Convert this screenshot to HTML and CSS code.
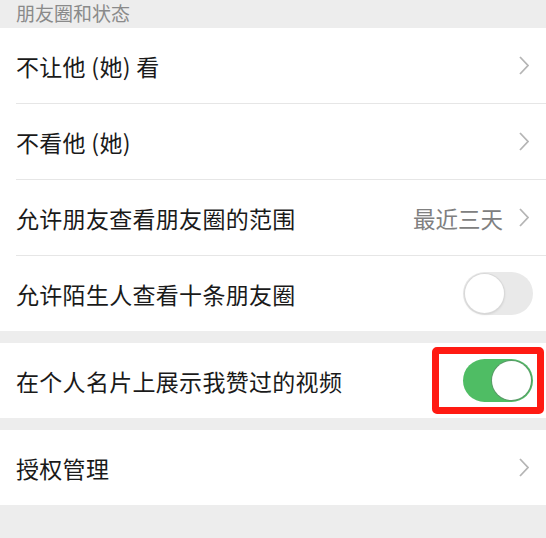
FILE: index.html
```html
<!DOCTYPE html>
<html lang="zh-CN">
<head>
<meta charset="utf-8">
<title>朋友圈和状态</title>
<link rel="stylesheet" href="styles.css">
</head>
<body>
<div class="page">
  <div class="section-title">朋友圈和状态</div>
  <div class="group">
    <div class="row">
      <span class="label">不让他 (她) 看</span>
      <span class="right"><svg class="chev" viewBox="0 0 10 19"><path d="M1 1 L9 9.5 L1 18" /></svg></span>
    </div>
    <div class="row">
      <span class="label">不看他 (她)</span>
      <span class="right"><svg class="chev" viewBox="0 0 10 19"><path d="M1 1 L9 9.5 L1 18" /></svg></span>
    </div>
    <div class="row">
      <span class="label">允许朋友查看朋友圈的范围</span>
      <span class="right"><span class="value">最近三天</span><svg class="chev" viewBox="0 0 10 19"><path d="M1 1 L9 9.5 L1 18" /></svg></span>
    </div>
    <div class="row row-switch">
      <span class="label">允许陌生人查看十条朋友圈</span>
      <span class="switch"><span class="knob"></span></span>
    </div>
  </div>
  <div class="group">
    <div class="row row-switch">
      <span class="label">在个人名片上展示我赞过的视频</span>
      <span class="switch on"><span class="knob"></span><span class="highlight"></span></span>
    </div>
  </div>
  <div class="group">
    <div class="row">
      <span class="label">授权管理</span>
      <span class="right"><svg class="chev" viewBox="0 0 10 19"><path d="M1 1 L9 9.5 L1 18" /></svg></span>
    </div>
  </div>
</div>
</body>
</html>
```

FILE: styles.css
```css
html, body {
  margin: 0;
  padding: 0;
  background: #ededed;
}
body {
  font-family: "Noto Sans CJK SC", "Noto Sans", sans-serif;
  width: 546px;
  height: 538px;
  overflow: hidden;
}
.page {
  display: flex;
  flex-direction: column;
  gap: 12px;
}
.section-title {
  height: 28px;
  line-height: 26px;
  padding-left: 16px;
  font-size: 19px;
  color: #8a8a8a;
  margin-bottom: -12px;
  overflow: hidden;
}
.group {
  background: #fff;
  display: flex;
  flex-direction: column;
}
.row {
  position: relative;
  height: 75px;
  display: flex;
  align-items: center;
  justify-content: space-between;
  padding: 0 17px 0 16px;
}
.row + .row::before {
  content: "";
  position: absolute;
  left: 16px;
  right: 0;
  top: -1px;
  height: 1px;
  background: #e6e6e6;
}
.row + .row {
  margin-top: 1px;
}
.label {
  font-size: 23px;
  color: #1a1a1a;
  letter-spacing: 0.3px;
}
.right {
  display: flex;
  align-items: center;
  gap: 16px;
}
.value {
  font-size: 22.5px;
  color: #808080;
}
.chev {
  width: 10px;
  height: 19px;
  fill: none;
  stroke: #b5b5b5;
  stroke-width: 1.8;
}
.row-switch {
  padding-right: 13px;
}
.switch {
  position: relative;
  width: 70px;
  height: 43px;
  border-radius: 22px;
  background: #e9e9e9;
  box-sizing: border-box;
  display: flex;
  align-items: center;
  padding: 0 2px;
}
.switch .knob {
  width: 39px;
  height: 39px;
  border-radius: 50%;
  background: #fff;
  box-shadow: 0 0 0 1px #d9d9d9, 0 1px 3px rgba(0,0,0,0.18);
}
.switch.on {
  background: #4fbd64;
  justify-content: flex-end;
}
.switch.on .knob {
  box-shadow: 0 0 0 1px #5a9a68;
}
.highlight {
  position: absolute;
  left: -31px;
  top: -12px;
  width: 112px;
  height: 67px;
  box-sizing: border-box;
  border: 7px solid #ff1a12;
  border-radius: 5px;
}
```
